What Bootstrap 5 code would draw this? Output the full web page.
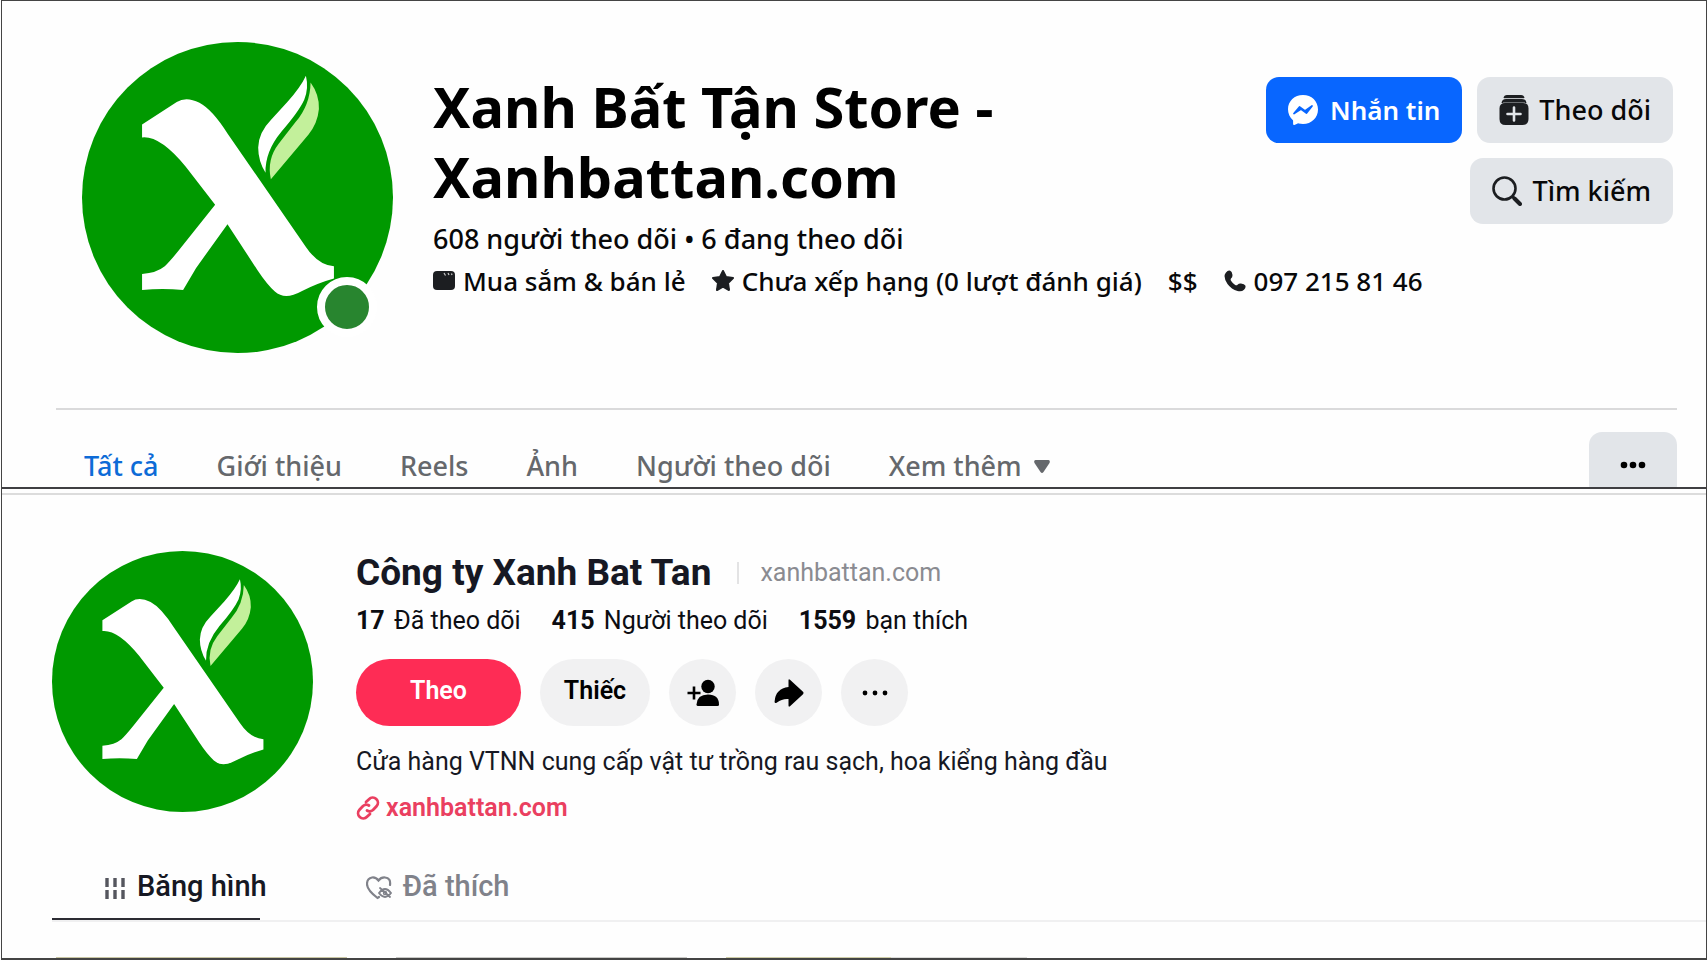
<!DOCTYPE html>
<html lang="vi">
<head>
<meta charset="utf-8">
<meta name="viewport" content="width=device-width, initial-scale=1">
<title>Xanh Bất Tận Store</title>
<link href="https://cdn.jsdelivr.net/npm/bootstrap@5.3.0/dist/css/bootstrap.min.css" rel="stylesheet">
<style>
  body { background: #fefefe; color: #080809; }
  a { text-decoration: none; color: inherit; }
  svg { flex: none; }
  .frame { border: 1px solid #444; border-bottom-width: 2px; min-height: 100vh; margin: 0 1px; }

  /* Store page */
  .store { font-family: "Noto Sans", sans-serif; font-weight: 500; border-bottom: 2px solid #3f3f42; }
  .store-head { padding: 41px 33px 0 80px; gap: 40px; min-height: 407px; }
  .store-avatar { width: 311px; height: 311px; }
  .online { right: 16px; bottom: 16px; width: 60px; height: 60px; border: 8px solid #fff; background: #28852f; }
  .store-body { padding-top: 29px; }
  .store-name { font-size: 56px; line-height: 70px; font-weight: 700; color: #000; }
  .store-stats { font-size: 27px; line-height: 43px; margin-top: 6px; }
  .store-meta { font-size: 26px; line-height: 42px; column-gap: 26px; }
  .store-meta li { gap: 8px; }
  .store-actions { gap: 15px; padding-top: 6px; }
  .btn-store { height: 66px; padding: 0 22px; border: 0; border-radius: 13px; font-size: 27px; font-weight: 500; gap: 10px; background: #e2e5e9; color: #080809; }
  .btn-message { background: #0866ff; color: #fff; font-size: 26px; font-weight: 600; gap: 12px; }
  .store-nav { margin: 0 29px 0 54px; border-top: 2px solid #dadadb; padding-top: 22px; font-size: 27px; line-height: 68px; color: #65686c; }
  .store-tabs { height: 55px; overflow: hidden; }
  .store-tabs .links { gap: 58px; padding-left: 28px; }
  .store-tabs .active { color: #0d6bd7; }
  .btn-more { width: 88px; justify-content: center; }

  /* Video profile */
  .profile { font-family: Roboto, sans-serif; font-size: 25px; line-height: 36px; color: #161823; margin-top: 4px; border-top: 2px solid #dcdcdc; }
  .profile-head { padding: 56px 50px 0; gap: 43px; }
  .profile-avatar { width: 261px; height: 261px; }
  .profile-name { font-size: 37px; line-height: 44px; font-weight: 700; }
  .handle { color: #8a8b91; border-left: 2px solid #e3e3e4; line-height: 22px; padding-left: 21px; }
  .stats { gap: 31px; margin-top: 8px; color: #0c0d12; }
  .stats b { margin-right: 3px; }
  .profile-actions { gap: 19px; margin-top: 20px; }
  .btn-pill { height: 67px; min-width: 67px; padding: 0 0 3px; border: 0; border-radius: 34px; background: #f1f1f2; font-size: 25px; font-weight: 600; color: #000; }
  .btn-follow { width: 165px; background: #fe2c55; color: #fff; }
  .btn-wide { width: 110px; }
  .bio { margin: 18px 0 10px; }
  .site-link { color: #ea3f60; font-weight: 600; gap: 6px; }
  .profile-tabs { margin: 35px 0 0 50px; height: 56px; border-bottom: 2px solid #f0f0f1; font-size: 29px; line-height: 40px; font-weight: 500; gap: 99px; padding-left: 52px; }
  .profile-tabs a { gap: 11px; }
  .profile-tabs .active::after { content: ""; position: absolute; left: -52px; bottom: 0; width: 208px; height: 2px; background: #2c2c33; }
  .muted-tab { color: #80828a; }
  .feed-edge { height: 1px; width: 57%; margin-left: 54px; background: linear-gradient(90deg, #c9c6a4 0 30%, #fefefe 30% 35%, #c9c9c6 35% 65%, #fefefe 65% 69%, #cfcda8 69% 86%, #dcdcda 86%); }
</style>
</head>
<body>
<svg class="d-none">
  <symbol id="brand" viewBox="34 34 932 932">
    <circle cx="500" cy="500" r="466" fill="#090"/>
    <path fill="#fff" d="M214 281L318 214Q346 196 386 216Q424 236 470 308L705 648Q742 703 789 706V743Q742 756 692 781Q642 809 612 782Q588 760 560 718L470 580L376 711L337 777Q275 772 214 777V729Q258 726 282 706Q298 691 326 656L433 522L345 408Q268 314 214 320Z"/>
    <path fill="#fff" d="M705 135Q714 172 700 207Q684 242 632 302Q582 362 584 426Q562 390 562 350Q563 306 600 268L650 213Q690 168 705 135Z"/>
    <path fill="#c3f09b" d="M719 155Q746 192 744 235Q740 278 713 311L600 445Q587 386 624 338L674 274Q718 222 719 155Z"/>
  </symbol>
</svg>

<main class="frame d-flex flex-column">
  <section class="store">
    <div class="store-head d-flex">
      <div class="store-avatar position-relative flex-shrink-0">
        <svg class="w-100 h-100" role="img" aria-label="Xanh Bất Tận"><use href="#brand"/></svg>
        <span class="online position-absolute rounded-circle"></span>
      </div>
      <div class="store-body flex-grow-1">
        <div class="d-flex justify-content-between">
          <div>
            <h1 class="store-name mb-0">Xanh Bất Tận Store - Xanhbattan.com</h1>
            <p class="store-stats mb-0">608 người theo dõi • 6 đang theo dõi</p>
          </div>
          <div class="store-actions d-flex flex-column align-items-end flex-shrink-0">
            <div class="d-flex" style="gap:15px">
              <button type="button" class="btn btn-store btn-message d-flex align-items-center">
                <svg width="30" height="30" viewBox="0 0 30 30"><path fill="#fff" d="M15 0C6.500 0 0 6.100 0 14.300c0 4.300 1.800 8 4.700 10.600.3.200.4.500.4.900v3.300c0 .7.700 1.100 1.300.8l3.300-1.500c.3-.1.600-.1.900 0 1.400.3 2.900.5 4.400.5 8.500 0 15-6.200 15-14.500S23.500 0 15 0z"/><path d="M6 18.500l5.500-6.500 5.500 4 7-5-5.500 7-5.500-4z" fill="#0866ff" stroke="#0866ff" stroke-width="1.800" stroke-linejoin="round"/></svg>
                Nhắn tin
              </button>
              <button type="button" class="btn btn-store d-flex align-items-center">
                <svg width="30" height="30" viewBox="0 0 30 30"><path fill="#1c1e21" d="M4.500 3Q5 0 8 0h14q3 0 3.500 3z"/><path fill="#1c1e21" d="M2.500 8Q3 4 7 4h16q4 0 4.500 4z"/><path d="M5 3.500h20M4 8h22" stroke="#b9bcc0" stroke-width="1"/><path fill="#1c1e21" d="M6 8h18q5.500 0 5.500 5.500V24q0 6-6 6h-17q-6 0-6-6V13.500Q.5 8 6 8z"/><path d="M15 12.500v13M8.500 19h13" stroke="#e2e5e9" stroke-width="2.600" stroke-linecap="round"/></svg>
                Theo dõi
              </button>
            </div>
            <button type="button" class="btn btn-store d-flex align-items-center">
              <svg width="30" height="30" viewBox="0 0 30 30" fill="none" stroke="#1c1e21"><circle cx="12.500" cy="12.500" r="11" stroke-width="2.600"/><path d="M20.500 20.500L22 22" stroke-width="3"/><path d="M22.500 22.500L28 28" stroke-width="4" stroke-linecap="round"/></svg>
              Tìm kiếm
            </button>
          </div>
        </div>
        <ul class="store-meta list-unstyled d-flex flex-wrap mb-0">
          <li class="d-flex align-items-center">
            <svg width="22" height="22" viewBox="0 0 22 22"><rect y="1" width="22" height="19" rx="4" fill="#1c1e21"/><path d="M11 3l1.500 2.500M15 3l1 2M18.500 3.500l.5 1.500" stroke="#ccc" stroke-width="1.200"/></svg>
            Mua sắm &amp; bán lẻ
          </li>
          <li class="d-flex align-items-center">
            <svg width="22" height="22" viewBox="0 0 22 22"><path fill="#1c1e21" stroke="#1c1e21" stroke-width="2" stroke-linejoin="round" d="M11 1l3 6 7 1-5 5 1 7-6-3.300L5 20l1-7-5-5 7-1z"/></svg>
            Chưa xếp hạng (0 lượt đánh giá)
          </li>
          <li>$$</li>
          <li class="d-flex align-items-center">
            <svg width="22" height="22" viewBox="0 0 22 22"><path fill="#1c1e21" d="M2 2.500Q4 0 6.200.8 8 1.500 8.400 4.500 8.800 7 7 8.500q-.8 1 .2 2.500 1.500 2.500 4 4 1.500.8 2.300-.2 1.500-1.600 3.500-1.300 3.500.5 4.300 2 .9 2-1.300 4.200-2.500 2.300-6.500 1.200Q7.500 19.500 3.500 14 .5 9.500.5 6q0-2 1.500-3.500z"/></svg>
            <a href="tel:0972158146">097 215 81 46</a>
          </li>
        </ul>
      </div>
    </div>
    <div class="store-nav">
      <nav class="store-tabs d-flex justify-content-between align-items-start">
        <div class="links d-flex">
          <a href="#" class="active">Tất cả</a>
          <a href="#">Giới thiệu</a>
          <a href="#">Reels</a>
          <a href="#">Ảnh</a>
          <a href="#">Người theo dõi</a>
          <a href="#" class="d-flex align-items-center" style="gap:12px">Xem thêm
            <svg width="16" height="13" viewBox="0 0 16 13"><path fill="#65686c" d="M1.500 0h13Q16.500.5 15.500 3L9.500 12Q8 14 6.500 12L.5 3Q-.5.5 1.500 0z"/></svg></a>
        </div>
        <button type="button" class="btn btn-store btn-more d-flex align-items-center" aria-label="Khác">
          <svg width="26" height="8" viewBox="0 0 26 8"><circle cx="4" cy="4" r="3.300"/><circle cx="13" cy="4" r="3.300"/><circle cx="22" cy="4" r="3.300"/></svg>
        </button>
      </nav>
    </div>
  </section>

  <section class="profile">
    <div class="profile-head d-flex">
      <svg class="profile-avatar" role="img" aria-label="Xanh Bat Tan"><use href="#brand"/></svg>
      <div>
        <div class="d-flex align-items-center" style="gap:26px">
          <h2 class="profile-name mb-0">Công ty Xanh Bat Tan</h2>
          <span class="handle">xanhbattan.com</span>
        </div>
        <div class="stats d-flex">
          <span><b>17</b> Đã theo dõi</span>
          <span><b>415</b> Người theo dõi</span>
          <span><b>1559</b> bạn thích</span>
        </div>
        <div class="profile-actions d-flex">
          <button type="button" class="btn btn-pill btn-follow">Theo</button>
          <button type="button" class="btn btn-pill btn-wide">Thiếc</button>
          <button type="button" class="btn btn-pill" aria-label="Thêm bạn">
            <svg width="32" height="28" viewBox="0 0 32 28"><circle cx="21" cy="7.500" r="6.700"/><path d="M9.500 25.500Q10 15.500 21 15.500T32 25.500q0 1.500-1.500 1.500H11q-1.500 0-1.500-1.500z"/><path d="M7 7.500v13M.5 14h13" stroke="#000" stroke-width="2.600"/></svg>
          </button>
          <button type="button" class="btn btn-pill" aria-label="Chia sẻ">
            <svg width="30" height="28" viewBox="0 0 30 28"><path d="M14.500 1.500Q14.500-.5 16 .8l13 12q1 1.200 0 2.400l-13 12q-1.500 1.200-1.500-.7V20Q8 19.500 3 23.500.5 25 .6 22.500 1.500 9.500 14.500 8z"/></svg>
          </button>
          <button type="button" class="btn btn-pill" aria-label="Khác">
            <svg width="26" height="8" viewBox="0 0 26 8"><circle cx="3" cy="4" r="2.400"/><circle cx="13" cy="4" r="2.400"/><circle cx="23" cy="4" r="2.400"/></svg>
          </button>
        </div>
        <p class="bio">Cửa hàng VTNN cung cấp vật tư trồng rau sạch, hoa kiểng hàng đầu</p>
        <a href="#" class="site-link d-inline-flex align-items-center">
          <svg width="24" height="26" viewBox="0 0 24 24" fill="none" stroke="#ea3f60" stroke-width="2.800" stroke-linecap="round"><path d="M10 6l3-2.800a5 5 0 0 1 7.500 7L17 14q-3 2.500-6 .5M14 18l-3 2.800a5 5 0 0 1-7.500-7L7 10q3-2.500 6-.5"/></svg>
          xanhbattan.com</a>
      </div>
    </div>
    <nav class="profile-tabs d-flex align-items-start">
      <a href="#" class="active position-relative h-100 d-flex align-items-start">
        <svg width="22" height="40" viewBox="0 0 22 40" stroke="#55565e" stroke-width="3.400"><path d="M3 12v9M11 12v9M19 12v9M3 24v9M11 24v9M19 24v9"/></svg>
        Băng hình</a>
      <a href="#" class="muted-tab d-flex align-items-start">
        <svg width="26" height="40" viewBox="0 0 26 40" fill="none" stroke="#80828a" stroke-width="2.200" stroke-linecap="round"><path d="M24 19q1-7-5-7.500-4-.3-6.500 3Q10 11 6 11.500 1 12.500 1 18q0 6 10.500 14l1.500-1"/><path d="M13 27q6-8 12 0-6 8-12 0zM14 22l10 9" stroke-width="1.800"/><circle cx="19" cy="27" r="1.500" stroke-width="1.500"/></svg>
        Đã thích</a>
    </nav>
  </section>
  <div class="feed-edge mt-auto"></div>
</main>
<script src="https://cdn.jsdelivr.net/npm/bootstrap@5.3.0/dist/js/bootstrap.bundle.min.js"></script>
</body>
</html>
